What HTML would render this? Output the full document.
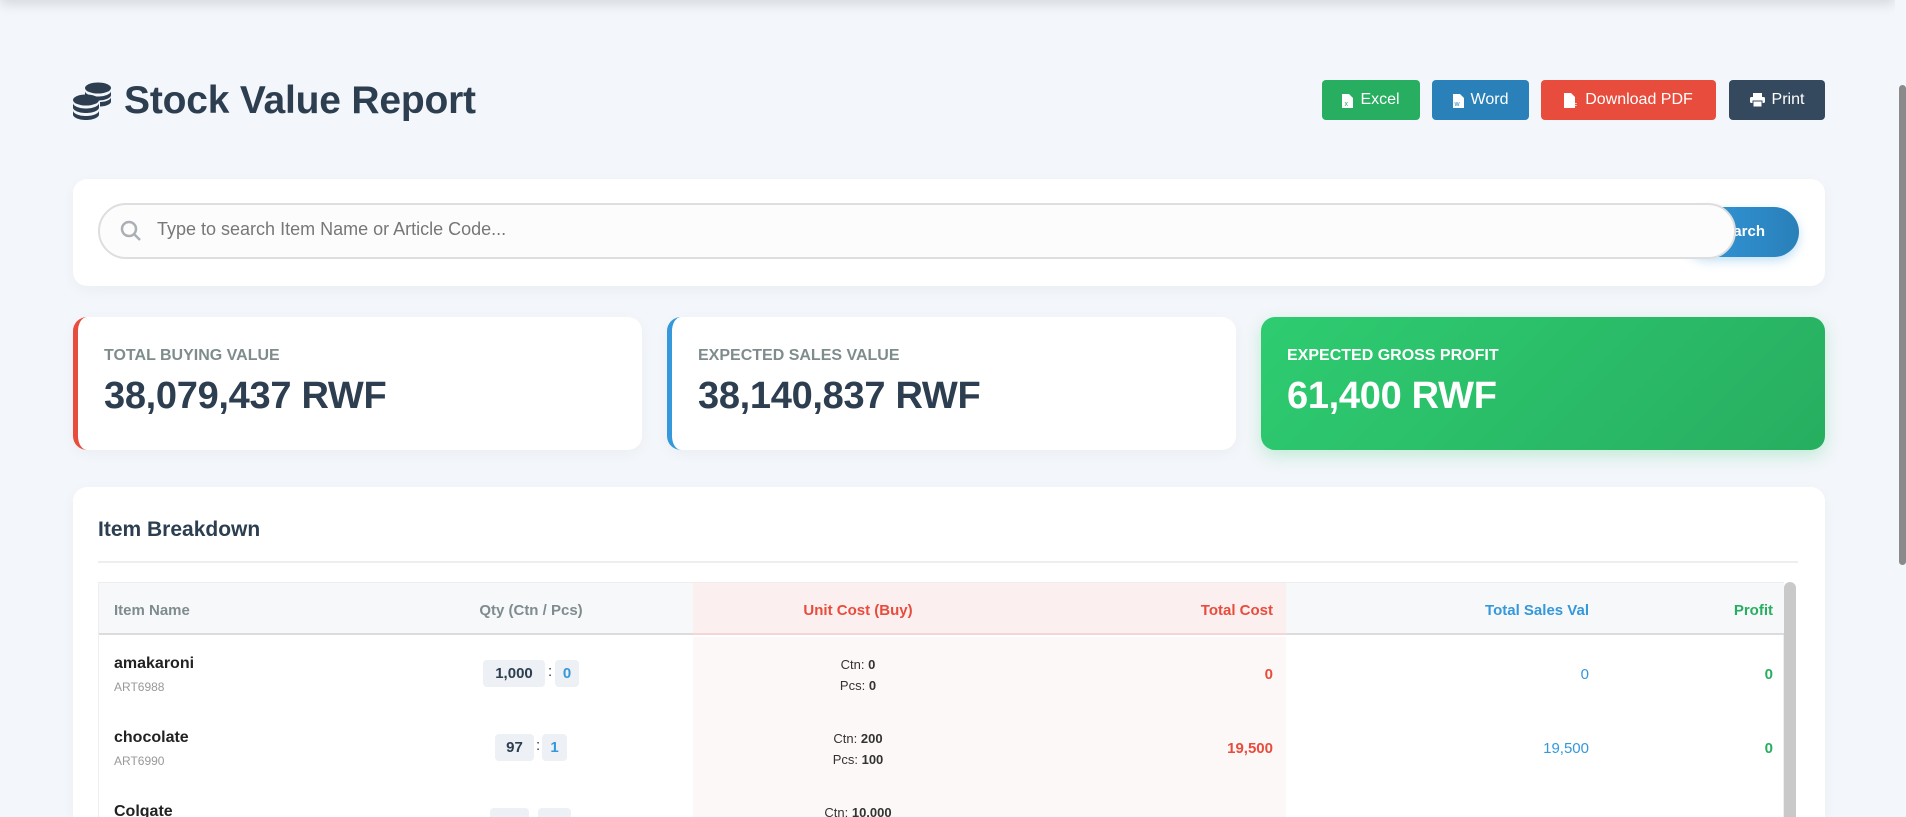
<!DOCTYPE html>
<html style="overflow:hidden;height:817px"><head><meta charset="utf-8"><style>
*{box-sizing:border-box;margin:0;padding:0}
body{width:1906px;height:817px;overflow:hidden;background:#f3f6fa;font-family:"Liberation Sans",Arial,sans-serif;color:#2c3e50;position:relative}
.topbar{position:absolute;left:0;top:-20px;width:1895px;height:20px;box-shadow:0 4px 12px rgba(0,0,0,.12)}
.abs{position:absolute}
.btn{position:absolute;top:80px;height:40px;border-radius:4px;color:#fff;font-size:16px;display:flex;align-items:center;justify-content:center;gap:7px}
.card{position:absolute;background:#fff;border-radius:14px;box-shadow:0 4px 14px rgba(0,0,0,.04)}
.lbl{position:absolute;left:26px;top:30px;font-size:16px;font-weight:bold;color:#7f8c8d}
.val{position:absolute;left:26px;top:58px;font-size:38px;font-weight:bold;color:#2c3e50;letter-spacing:-0.3px}
.th{position:absolute;top:602px;font-size:15px;font-weight:bold}
.nm{position:absolute;left:114px;font-size:16px;font-weight:bold;color:#222}
.cd{position:absolute;left:114px;font-size:12px;color:#999}
.bd{position:absolute;height:27px;background:#edf0f4;border-radius:4px;font-size:15px;font-weight:bold;display:flex;align-items:center;justify-content:center}
.uc{position:absolute;left:693px;width:330px;text-align:center;font-size:13px;color:#333}
.r{position:absolute;text-align:right;font-size:15px}
</style></head><body>
<div class="topbar"></div>
<svg class="abs" style="left:72px;top:82px" width="42" height="38" viewBox="0 0 42 38" fill="#2c3e50">
<ellipse cx="26" cy="6" rx="13" ry="5.5"/><path d="M13 9v4c0 3 6 5.5 13 5.5s13-2.5 13-5.5V9c0 3-6 5.5-13 5.5S13 12 13 9z"/><path d="M28 20v4.5c5 0 11-2 11-5v-4.5c0 3-6 5-11 5z"/>
<ellipse cx="14" cy="18" rx="13" ry="5.5"/><path d="M1 21v4.5c0 3 6 5.5 13 5.5s13-2.5 13-5.5V21c0 3-6 5.5-13 5.5S1 24 1 21z"/><path d="M1 28.5v4c0 3 6 5.5 13 5.5s13-2.5 13-5.5v-4c0 3-6 5.5-13 5.5S1 31.5 1 28.5z"/>
</svg>
<div class="abs" style="left:124px;top:79px;font-size:39px;font-weight:bold;letter-spacing:-0.2px">Stock Value Report</div>

<div class="btn" style="left:1322px;width:98px;background:#27ae60"><svg width="11" height="15" viewBox="0 0 11 15"><path d="M0 1h7l4 4v10H0z" fill="#fff"/><text x="2.5" y="13" font-size="7" fill="#27ae60" font-family="Liberation Sans">x</text></svg>Excel</div>
<div class="btn" style="left:1432px;width:97px;background:#2a80b9"><svg width="11" height="15" viewBox="0 0 11 15"><path d="M0 1h7l4 4v10H0z" fill="#fff"/><text x="1.5" y="13" font-size="7" fill="#2a80b9" font-family="Liberation Sans">w</text></svg>Word</div>
<div class="btn" style="left:1541px;width:175px;background:#e74c3c"><svg width="14" height="15" viewBox="0 0 14 15"><path d="M0 0h7l4 4v11H0z" fill="#fff"/><text x="3" y="14" font-size="5" fill="#fff" font-family="Liberation Sans" font-weight="bold">PDF</text></svg>Download PDF</div>
<div class="btn" style="left:1729px;width:96px;background:#34495e"><svg width="15" height="14" viewBox="0 0 15 14" fill="#fff"><rect x="3" y="0" width="9" height="4"/><rect x="0" y="4" width="15" height="6" rx="1.5"/><rect x="3" y="8" width="9" height="6" fill="#fff" stroke="#34495e"/></svg>Print</div>

<div class="card" style="left:73px;top:179px;width:1752px;height:107px"></div>
<div class="abs" style="left:1683px;top:207px;width:116px;height:50px;border-radius:25px;background:linear-gradient(90deg,#3498db,#2980b9);color:#fff;font-weight:bold;font-size:15px;line-height:50px;text-align:right;padding-right:34px;box-shadow:0 4px 10px rgba(52,152,219,.3)">Search</div>
<div class="abs" style="left:98px;top:203px;width:1638px;height:56px;border:2px solid #dedede;border-radius:28px;background:#fcfcfc"></div>
<svg class="abs" style="left:119px;top:219px" width="24" height="24" viewBox="0 0 24 24" fill="none" stroke="#aab0b5" stroke-width="2.5"><circle cx="10" cy="10" r="7"/><path d="M15 15l6 6"/></svg>
<div class="abs" style="left:157px;top:219px;font-size:18px;color:#777">Type to search Item Name or Article Code...</div>

<div class="card" style="left:73px;top:317px;width:569px;height:133px;border-left:5px solid #e74c3c"><div class="lbl">TOTAL BUYING VALUE</div><div class="val">38,079,437 RWF</div></div>
<div class="card" style="left:667px;top:317px;width:569px;height:133px;border-left:5px solid #3498db"><div class="lbl">EXPECTED SALES VALUE</div><div class="val">38,140,837 RWF</div></div>
<div class="card" style="left:1261px;top:317px;width:564px;height:133px;background:linear-gradient(135deg,#2ecc71,#27ae60);box-shadow:0 6px 16px rgba(46,204,113,.25)"><div class="lbl" style="color:#fff">EXPECTED GROSS PROFIT</div><div class="val" style="color:#fff">61,400 RWF</div></div>

<div class="card" style="left:73px;top:487px;width:1752px;height:330px;border-radius:14px 14px 0 0"></div>
<div class="abs" style="left:98px;top:518px;font-size:21px;font-weight:bold">Item Breakdown</div>
<div class="abs" style="left:98px;top:561px;width:1700px;height:2px;background:#eee"></div>
<div class="abs" style="left:98px;top:582px;width:1686px;height:235px;border:1px solid #eee;border-bottom:none"></div>
<div class="abs" style="left:99px;top:583px;width:1685px;height:52px;background:#f7f8fa;border-bottom:2px solid #dcdcdc"></div>
<div class="abs" style="left:693px;top:583px;width:593px;height:52px;background:#fcefef;border-bottom:2px solid #f6d5d7"></div>
<div class="abs" style="left:693px;top:637px;width:593px;height:180px;background:#fdf8f8"></div>
<div class="abs" style="left:1784px;top:582px;width:12px;height:235px;background:#c9c9c9;border-radius:6px 6px 0 0"></div>
<div class="th" style="left:114px;color:#7f8c8d">Item Name</div>
<div class="th" style="left:431px;width:200px;text-align:center;color:#7f8c8d">Qty (Ctn / Pcs)</div>
<div class="th" style="left:758px;width:200px;text-align:center;color:#e74c3c">Unit Cost (Buy)</div>
<div class="th" style="left:1073px;width:200px;text-align:right;color:#e74c3c">Total Cost</div>
<div class="th" style="left:1389px;width:200px;text-align:right;color:#3498db">Total Sales Val</div>
<div class="th" style="left:1573px;width:200px;text-align:right;color:#27ae60">Profit</div>

<div class="nm" style="top:655px">amakaroni</div><div class="cd" style="top:680px">ART6988</div>
<div class="bd" style="left:483px;top:660px;width:62px">1,000</div><div class="abs" style="left:548px;top:663px;font-size:15px">:</div><div class="bd" style="left:555px;top:660px;width:24px;color:#3498db">0</div>
<div class="uc" style="top:657px">Ctn: <b>0</b></div><div class="uc" style="top:678px">Pcs: <b>0</b></div>
<div class="r" style="left:1073px;width:200px;top:666px;color:#e74c3c;font-weight:bold">0</div>
<div class="r" style="left:1389px;width:200px;top:666px;color:#3498db">0</div>
<div class="r" style="left:1573px;width:200px;top:666px;color:#27ae60;font-weight:bold">0</div>

<div class="nm" style="top:729px">chocolate</div><div class="cd" style="top:754px">ART6990</div>
<div class="bd" style="left:495px;top:734px;width:39px">97</div><div class="abs" style="left:536px;top:737px;font-size:15px">:</div><div class="bd" style="left:542px;top:734px;width:25px;color:#3498db">1</div>
<div class="uc" style="top:731px">Ctn: <b>200</b></div><div class="uc" style="top:752px">Pcs: <b>100</b></div>
<div class="r" style="left:1073px;width:200px;top:740px;color:#e74c3c;font-weight:bold">19,500</div>
<div class="r" style="left:1389px;width:200px;top:740px;color:#3498db">19,500</div>
<div class="r" style="left:1573px;width:200px;top:740px;color:#27ae60;font-weight:bold">0</div>

<div class="nm" style="top:803px">Colgate</div>
<div class="bd" style="left:490px;top:808px;width:39px"></div><div class="bd" style="left:538px;top:808px;width:33px"></div>
<div class="uc" style="top:805px">Ctn: <b>10,000</b></div>

<div class="abs" style="left:1895px;top:0;width:11px;height:817px;background:#f3f6fa"></div>
<div class="abs" style="left:1899px;top:85px;width:7px;height:480px;background:#8a8a8a;border-radius:4px"></div>
</body></html>
